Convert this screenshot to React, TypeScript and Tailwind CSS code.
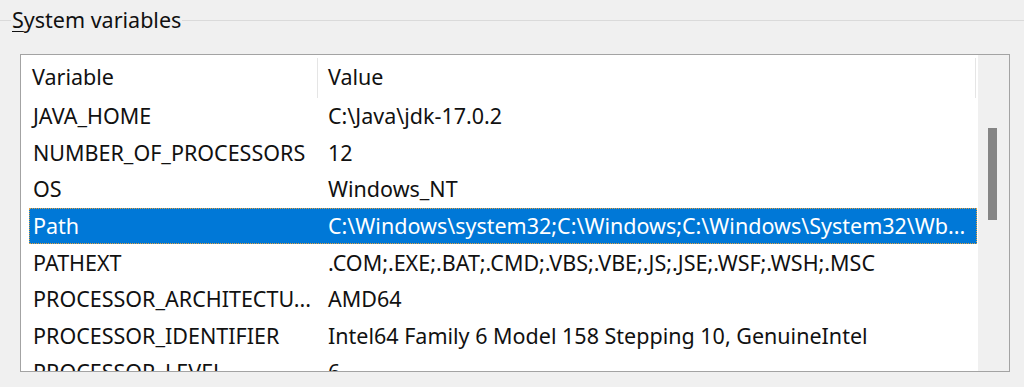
import React from "react";

const rows: [string, string][] = [
  ["JAVA_HOME", "C:\\Java\\jdk-17.0.2"],
  ["NUMBER_OF_PROCESSORS", "12"],
  ["OS", "Windows_NT"],
  ["Path", "C:\\Windows\\system32;C:\\Windows;C:\\Windows\\System32\\Wb..."],
  ["PATHEXT", ".COM;.EXE;.BAT;.CMD;.VBS;.VBE;.JS;.JSE;.WSF;.WSH;.MSC"],
  ["PROCESSOR_ARCHITECTU...", "AMD64"],
  ["PROCESSOR_IDENTIFIER", "Intel64 Family 6 Model 158 Stepping 10, GenuineIntel"],
  ["PROCESSOR_LEVEL", "6"],
];

export default function App() {
  return (
    <div
      className="w-[1024px] h-[387px] bg-[#f0f0f0] overflow-hidden text-[21.5px] text-[#111111]"
      style={{ fontFamily: '"Noto Sans", "Open Sans", sans-serif' }}
    >
      <div className="flex items-center h-[28px] mt-[6px]">
        <div className="w-[11px] h-px bg-[#dadada]" />
        <div className="px-[1px] leading-[28px] whitespace-nowrap">
          <span className="underline underline-offset-[3px] decoration-1">S</span>ystem variables
        </div>
        <div className="flex-1 h-px bg-[#dadada]" />
      </div>
      <div className="ml-[20px] mt-[20px] w-[990px] h-[318px] border border-[#a3a3a3] flex">
        <div className="flex-1 bg-white flex flex-col overflow-hidden">
          <div className="h-[43px] flex items-center shrink-0">
            <div className="w-[296px] h-[40px] flex items-center pl-[11px] mt-[2px]">Variable</div>
            <div className="w-px h-[40px] bg-[#e5e5e5] mt-[2px]" />
            <div className="flex-1 h-[40px] flex items-center pl-[10px] mt-[2px]">Value</div>
            <div className="w-px h-[40px] bg-[#e5e5e5] mt-[2px] mr-[2px]" />
          </div>
          {rows.map(([k, v], i) => {
            const sel = k === "Path";
            return (
              <div
                key={i}
                className={
                  "ml-[8px] mr-[1px] h-[36.6px] shrink-0 flex items-center whitespace-nowrap " +
                  (sel
                    ? "bg-[#0078d7] text-white outline-1 outline-dotted outline-[#e0a040] -outline-offset-1"
                    : "")
                }
              >
                <div className="w-[288px] pl-[4px] overflow-hidden">{k}</div>
                <div className="flex-1 pl-[11px] overflow-hidden">{v}</div>
              </div>
            );
          })}
        </div>
        <div className="w-[31px] bg-[#f0f0f0] relative">
          <div className="absolute left-[10px] top-[73px] w-[9px] h-[92px] bg-[#858585]" />
        </div>
      </div>
    </div>
  );
}
